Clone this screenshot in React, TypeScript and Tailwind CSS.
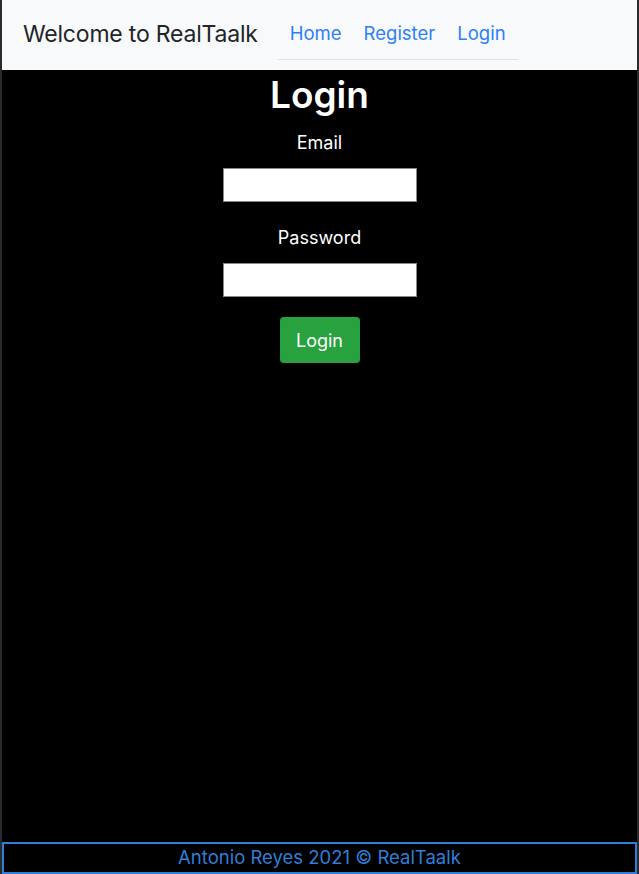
export default function App() {
  return (
    <div
      className="flex h-[874px] flex-col bg-black border-l-2 border-r-2 border-[#2a2a2a]"
      style={{ fontFamily: "Inter, 'Liberation Sans', sans-serif" }}
    >
      {/* Navbar */}
      <nav className="flex h-[70px] items-center bg-[#f8f9fa] pl-[21px]">
        <span className="pb-[2px] text-[23px] text-[#212529] tracking-[-0.2px]">Welcome to RealTaalk</span>
        <div className="ml-[20px] flex gap-[22px] self-stretch items-center border-b border-[#dee2e6] mb-[10px] mt-[10px] pb-[2px] pl-[12px] pr-[11px] w-[240px]">
          <a className="text-[18.5px] text-[#2f7ff6]">Home</a>
          <a className="text-[18.5px] text-[#2f7ff6]">Register</a>
          <a className="text-[18.5px] text-[#2f7ff6]">Login</a>
        </div>
      </nav>

      {/* Login form */}
      <main className="flex flex-1 flex-col items-center text-white">
        <h1 className="mt-[1px] text-[37px] font-semibold leading-[48px]">Login</h1>
        <label className="mt-[13px] text-[18px] leading-[22px]">Email</label>
        <input className="mt-[14px] h-[34px] w-[194px] border border-[#888] bg-white" />
        <label className="mt-[25px] text-[18px] leading-[22px]">Password</label>
        <input className="mt-[14px] h-[34px] w-[194px] border border-[#888] bg-white" />
        <button className="mt-[20px] h-[46px] w-[80px] rounded-[4px] bg-[#28a13f] text-[18px] text-white">
          Login
        </button>
      </main>

      {/* Footer */}
      <footer className="flex h-[32px] items-center justify-center border-2 border-[#2f7fd8] text-[18.5px] text-[#2f7fd8]">
        Antonio Reyes 2021 © RealTaalk
      </footer>
    </div>
  );
}
